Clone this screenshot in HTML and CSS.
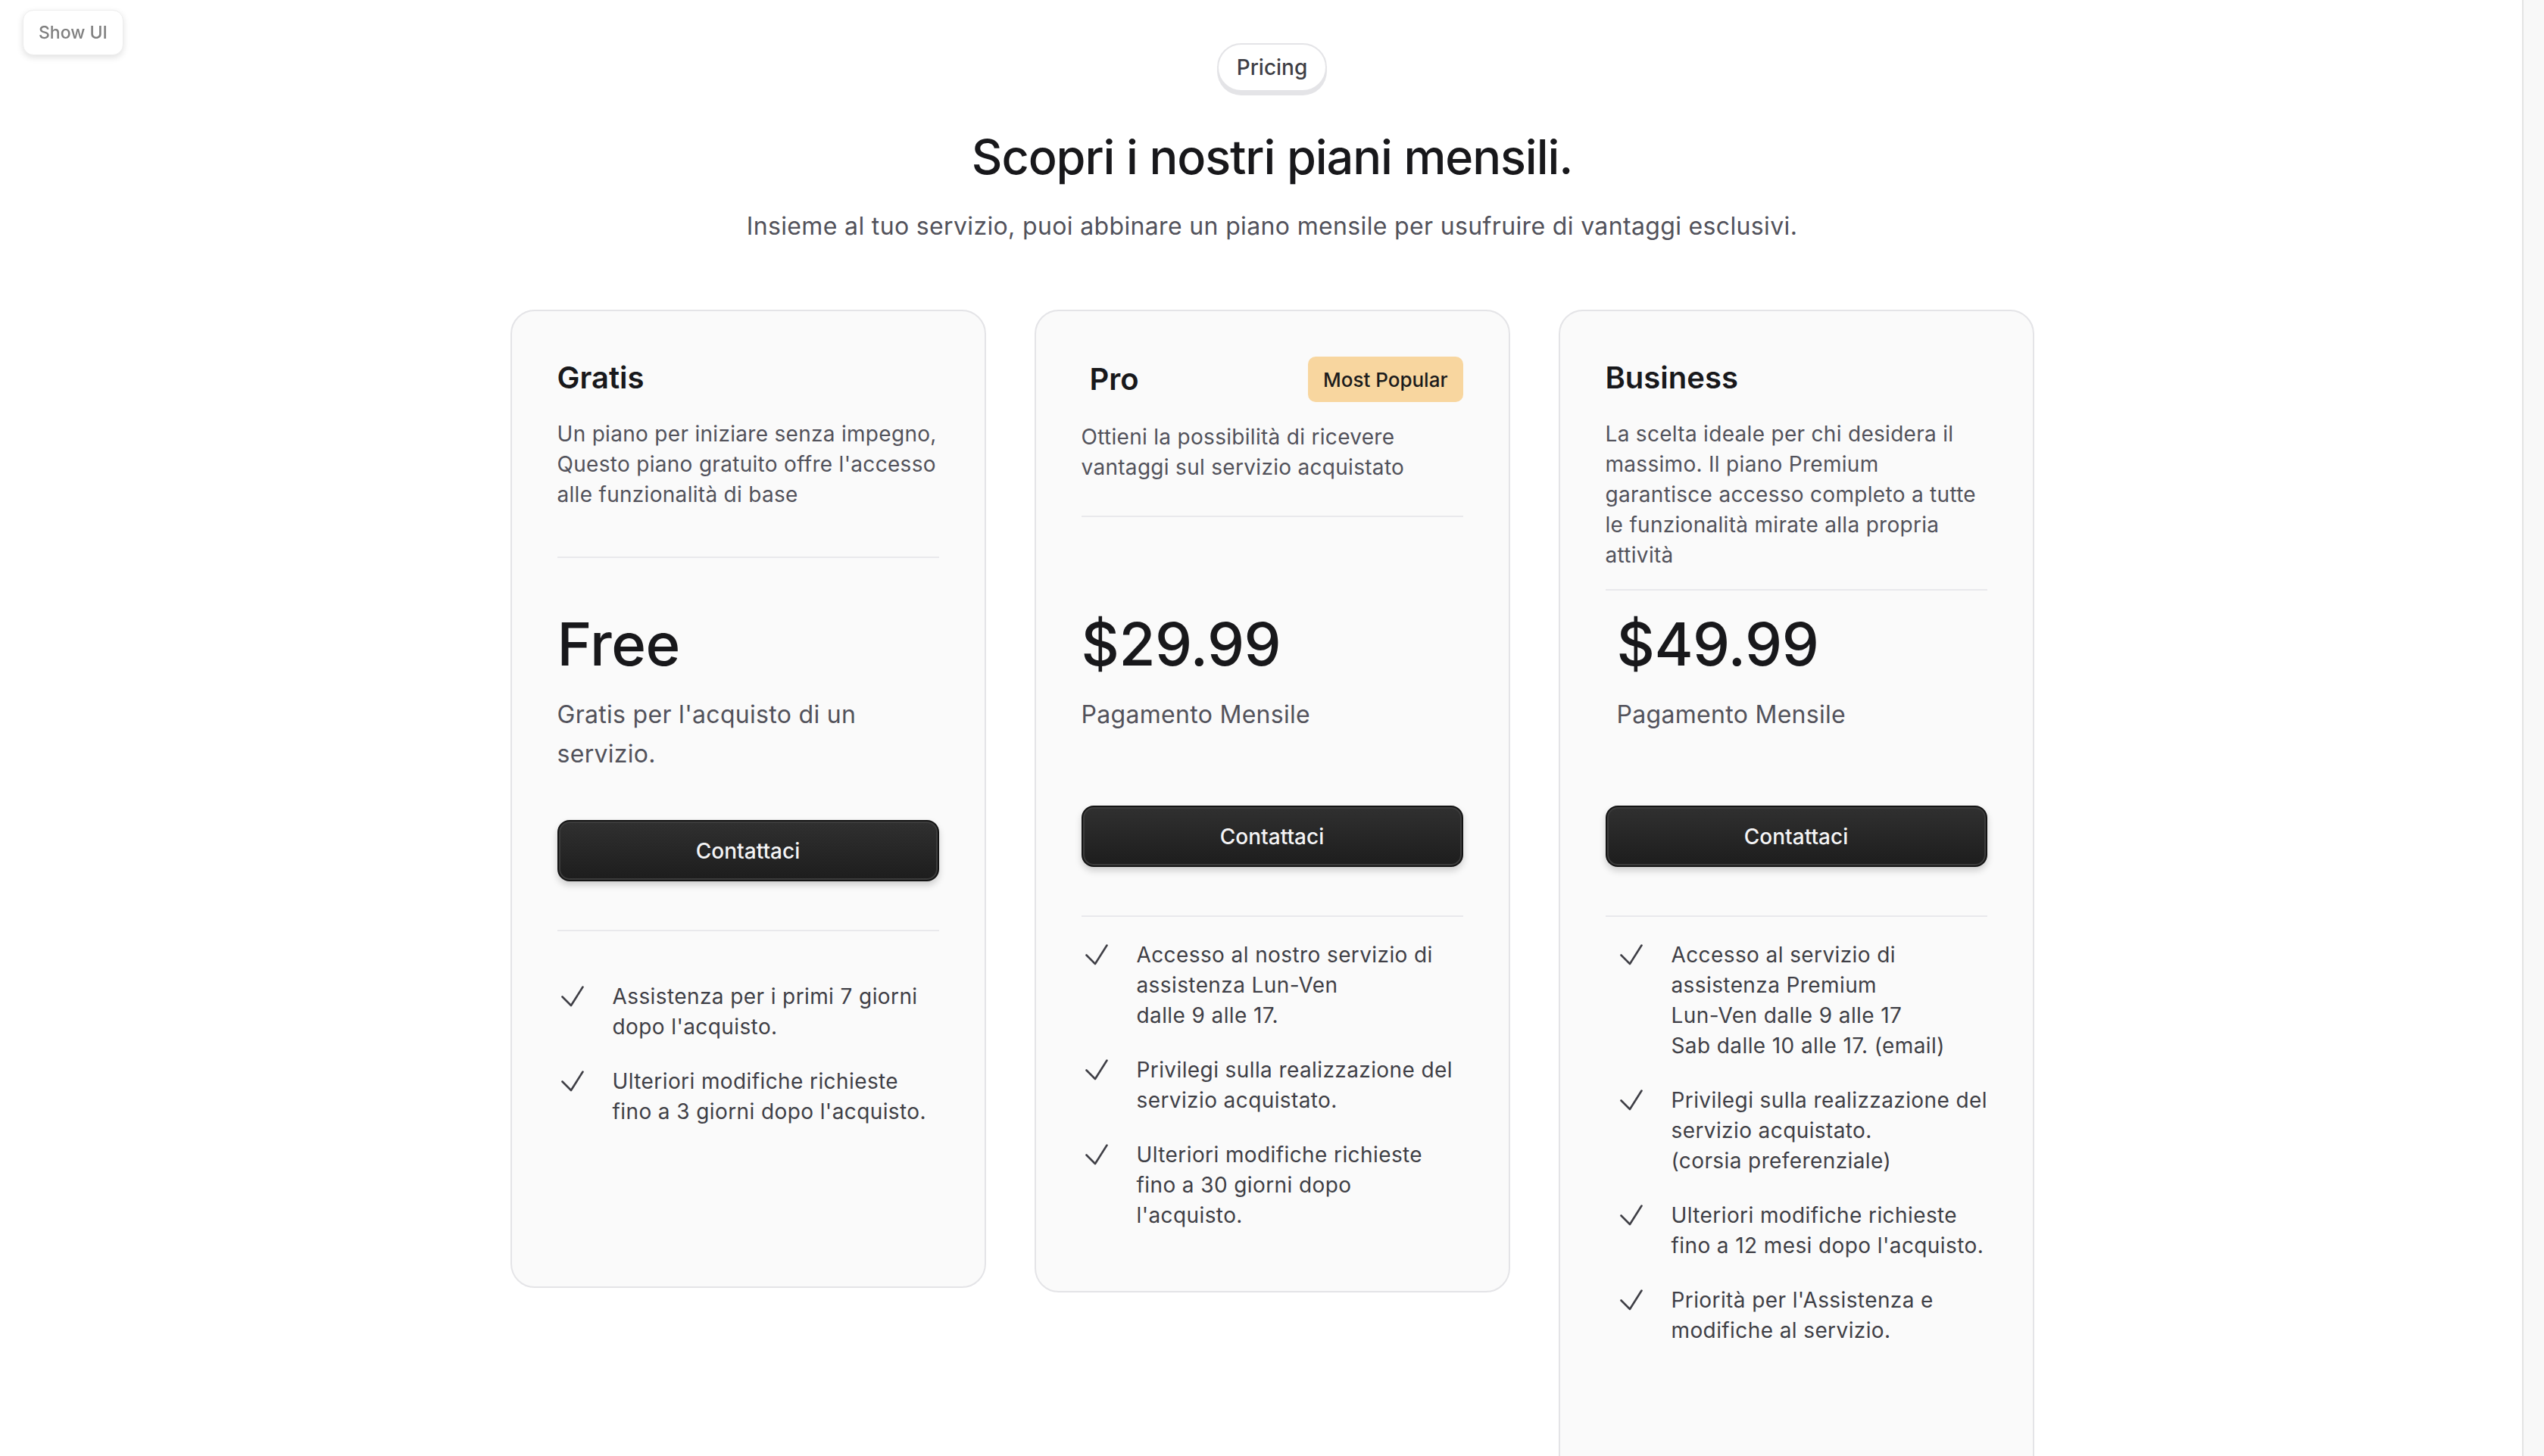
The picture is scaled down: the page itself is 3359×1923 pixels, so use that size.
FILE: index.html
```html
<!DOCTYPE html>
<html lang="it">
<head>
<meta charset="utf-8">
<title>Pricing</title>
<link rel="stylesheet" href="styles.css">
</head>
<body>
<button class="show-ui" type="button">Show UI</button>
<div class="scroll-track" aria-hidden="true"></div>
<main class="page">
  <header class="intro">
    <span class="pill">Pricing</span>
    <h1 class="headline">Scopri i nostri piani mensili.</h1>
    <p class="lead">Insieme al tuo servizio, puoi abbinare un piano mensile per usufruire di vantaggi esclusivi.</p>
  </header>

  <section class="plans">
    <article class="card card--free">
      <div class="card-head">
        <div class="title-row"><h2 class="plan-name">Gratis</h2></div>
        <p class="plan-desc">Un piano per iniziare senza impegno,<br>Questo piano gratuito offre l'accesso<br>alle funzionalità di base</p>
        <div class="rule rule--free"></div>
      </div>
      <div class="price-block">
        <div class="price">Free</div>
        <p class="price-note">Gratis per l'acquisto di un<br>servizio.</p>
      </div>
      <button class="cta cta--free" type="button">Contattaci</button>
      <div class="rule rule--cta"></div>
      <ul class="features features--free">
        <li class="feature"><svg class="check" viewBox="0 0 30 30"><path d="M1.5 15.5 L13 27 L28.5 2.5"/></svg><span>Assistenza per i primi 7 giorni<br>dopo l'acquisto.</span></li>
        <li class="feature"><svg class="check" viewBox="0 0 30 30"><path d="M1.5 15.5 L13 27 L28.5 2.5"/></svg><span>Ulteriori modifiche richieste<br>fino a 3 giorni dopo l'acquisto.</span></li>
      </ul>
    </article>

    <article class="card card--pro">
      <div class="card-head">
        <div class="title-row title-row--badge">
          <h2 class="plan-name plan-name--pro">Pro</h2>
          <span class="badge">Most Popular</span>
        </div>
        <p class="plan-desc">Ottieni la possibilità di ricevere<br>vantaggi sul servizio acquistato</p>
        <div class="rule rule--pro"></div>
      </div>
      <div class="price-block">
        <div class="price">$29.99</div>
        <p class="price-note">Pagamento Mensile</p>
      </div>
      <button class="cta" type="button">Contattaci</button>
      <div class="rule rule--cta"></div>
      <ul class="features">
        <li class="feature"><svg class="check" viewBox="0 0 30 30"><path d="M1.5 15.5 L13 27 L28.5 2.5"/></svg><span>Accesso al nostro servizio di<br>assistenza Lun-Ven<br>dalle 9 alle 17.</span></li>
        <li class="feature"><svg class="check" viewBox="0 0 30 30"><path d="M1.5 15.5 L13 27 L28.5 2.5"/></svg><span>Privilegi sulla realizzazione del<br>servizio acquistato.</span></li>
        <li class="feature"><svg class="check" viewBox="0 0 30 30"><path d="M1.5 15.5 L13 27 L28.5 2.5"/></svg><span>Ulteriori modifiche richieste<br>fino a 30 giorni dopo<br>l'acquisto.</span></li>
      </ul>
    </article>

    <article class="card card--business">
      <div class="card-head">
        <div class="title-row"><h2 class="plan-name">Business</h2></div>
        <p class="plan-desc">La scelta ideale per chi desidera il<br>massimo. Il piano Premium<br>garantisce accesso completo a tutte<br>le funzionalità mirate alla propria<br>attività</p>
        <div class="rule rule--business"></div>
      </div>
      <div class="price-block price-block--inset">
        <div class="price">$49.99</div>
        <p class="price-note">Pagamento Mensile</p>
      </div>
      <button class="cta" type="button">Contattaci</button>
      <div class="rule rule--cta"></div>
      <ul class="features features--inset">
        <li class="feature"><svg class="check" viewBox="0 0 30 30"><path d="M1.5 15.5 L13 27 L28.5 2.5"/></svg><span>Accesso al servizio di<br>assistenza Premium<br>Lun-Ven dalle 9 alle 17<br>Sab dalle 10 alle 17. (email)</span></li>
        <li class="feature"><svg class="check" viewBox="0 0 30 30"><path d="M1.5 15.5 L13 27 L28.5 2.5"/></svg><span>Privilegi sulla realizzazione del<br>servizio acquistato.<br>(corsia preferenziale)</span></li>
        <li class="feature"><svg class="check" viewBox="0 0 30 30"><path d="M1.5 15.5 L13 27 L28.5 2.5"/></svg><span>Ulteriori modifiche richieste<br>fino a 12 mesi dopo l'acquisto.</span></li>
        <li class="feature"><svg class="check" viewBox="0 0 30 30"><path d="M1.5 15.5 L13 27 L28.5 2.5"/></svg><span>Priorità per l'Assistenza e<br>modifiche al servizio.</span></li>
      </ul>
    </article>
  </section>
</main>
</body>
</html>
```

FILE: styles.css
```css
html {
  scrollbar-width: none;
}
html::-webkit-scrollbar {
  display: none;
}
* {
  box-sizing: border-box;
}
body {
  margin: 0;
  background: #ffffff;
  font-family: Inter, "Noto Sans", "Liberation Sans", sans-serif;
  color: #18181b;
}

.show-ui {
  position: fixed;
  left: 30px;
  top: 13px;
  height: 60px;
  padding: 0 20px;
  background: #ffffff;
  border: 1px solid #ededed;
  border-radius: 14px;
  box-shadow: 0 3px 8px rgba(0, 0, 0, 0.12);
  font-family: Inter, "Noto Sans", sans-serif;
  font-size: 23px;
  font-weight: 500;
  color: #808080;
  z-index: 10;
}

.scroll-track {
  position: fixed;
  top: 0;
  right: 0;
  width: 29px;
  height: 100vh;
  background: #f8f8f8;
  border-left: 2px solid #e4e4e4;
  z-index: 5;
}

.page {
  display: flex;
  flex-direction: column;
  align-items: center;
  padding-top: 57px;
}

.intro {
  display: flex;
  flex-direction: column;
  align-items: center;
}

.pill {
  display: inline-flex;
  align-items: center;
  height: 64px;
  padding: 0 24px;
  border: 2px solid #e4e4e7;
  border-radius: 999px;
  background: #ffffff;
  box-shadow: 0 5px 0 #e4e4e7;
  font-size: 28px;
  font-weight: 500;
  color: #3f3f46;
}

.headline {
  margin: 46px 0 0;
  font-size: 63px;
  line-height: 80px;
  font-weight: 500;
  letter-spacing: -1.1px;
  color: #18181b;
}

.lead {
  margin: 28px 0 0;
  font-size: 32px;
  line-height: 48px;
  letter-spacing: 0.35px;
  color: #52525b;
}

.plans {
  display: grid;
  grid-template-columns: repeat(3, 628px);
  gap: 64px;
  align-items: start;
  margin-top: 86px;
}

.card {
  display: flex;
  flex-direction: column;
  background: #fafafa;
  border: 2px solid #e4e4e7;
  border-radius: 32px;
  padding: 60px 60px 80px;
}
.card--free {
  min-height: 1292px;
}
.card--business {
  min-height: 1620px;
}

.card-head {
  height: 336px;
  display: flex;
  flex-direction: column;
}

.title-row {
  display: flex;
  align-items: center;
  justify-content: space-between;
  height: 56px;
}
.title-row--badge {
  height: 60px;
}

.plan-name {
  margin: 0;
  font-size: 40px;
  line-height: 56px;
  font-weight: 600;
  color: #18181b;
}
.plan-name--pro {
  padding-left: 11px;
}

.badge {
  display: inline-flex;
  align-items: center;
  height: 60px;
  padding: 0 20px;
  border-radius: 10px;
  background: #f8d69f;
  font-size: 26px;
  font-weight: 500;
  color: #1c1c1c;
}

.plan-desc {
  margin: 26px 0 0;
  font-size: 28px;
  line-height: 40px;
  letter-spacing: 0.3px;
  color: #52525b;
  white-space: nowrap;
}

.rule {
  height: 2px;
  background: #e9e9ec;
  flex-shrink: 0;
}
.rule--free {
  margin-top: 62px;
}
.rule--pro {
  margin-top: 44px;
}
.rule--business {
  margin-top: 25px;
}
.rule--cta {
  margin-top: 64px;
}

.price-block--inset {
  padding-left: 15px;
}

.price {
  font-size: 78px;
  line-height: 88px;
  font-weight: 500;
  letter-spacing: -0.5px;
  color: #18181b;
}

.price-note {
  margin: 23px 0 0;
  font-size: 32px;
  line-height: 52px;
  letter-spacing: 0.3px;
  color: #52525b;
  white-space: nowrap;
}

.cta {
  margin-top: 94px;
  height: 81px;
  width: 100%;
  border: 2px solid #141414;
  border-radius: 16px;
  background: linear-gradient(180deg, #303030 0%, #1d1d1d 100%);
  box-shadow: inset 0 0 0 2px #3c3c3c, 0 5px 10px rgba(0, 0, 0, 0.18);
  font-family: Inter, "Noto Sans", sans-serif;
  font-size: 28px;
  font-weight: 500;
  color: #f4f4f5;
}
.cta--free {
  margin-top: 61px;
}

.features {
  list-style: none;
  margin: 30px 0 0;
  padding: 0;
  display: flex;
  flex-direction: column;
  gap: 32px;
}
.features--free {
  margin-top: 66px;
}
.features--inset {
  margin-top: 30px;
  padding-left: 14px;
}

.feature {
  display: flex;
  align-items: flex-start;
  gap: 38px;
  padding-left: 5px;
  font-size: 28px;
  line-height: 40px;
  letter-spacing: 0.4px;
  color: #3f3f46;
  white-space: nowrap;
}

.check {
  flex: none;
  width: 30px;
  height: 30px;
  margin-top: 5px;
  fill: none;
  stroke: #3f3f46;
  stroke-width: 2.6;
  stroke-linecap: round;
  stroke-linejoin: round;
}
```
